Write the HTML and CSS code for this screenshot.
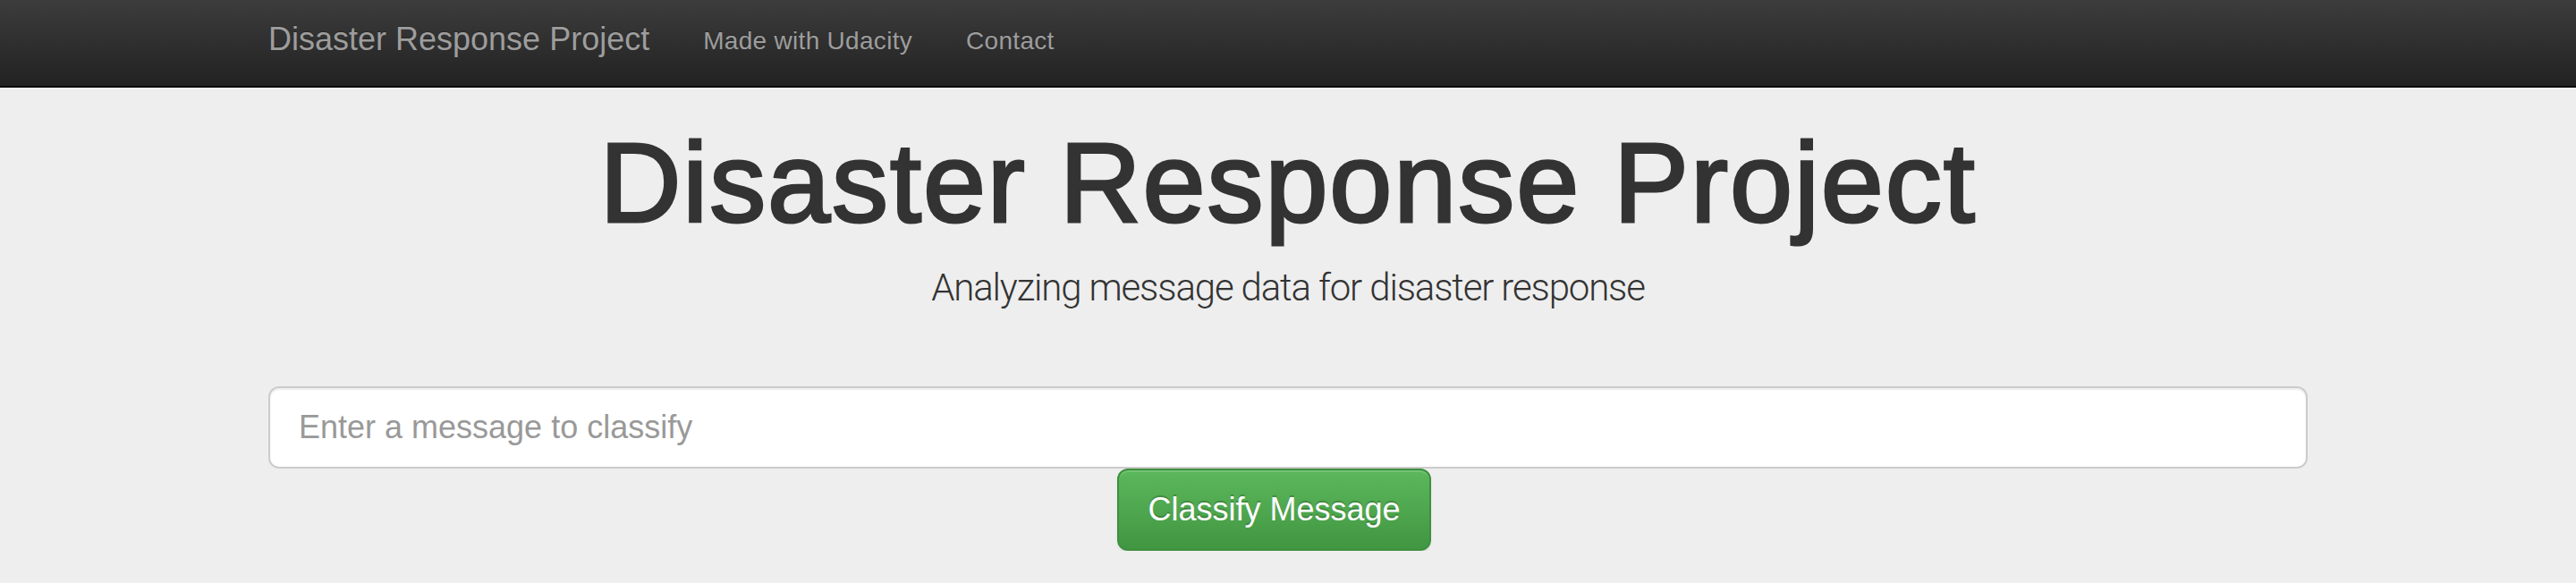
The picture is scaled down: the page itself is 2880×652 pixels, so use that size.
FILE: index.html
```html
<!DOCTYPE html>
<html lang="en">
<head>
<meta charset="utf-8">
<title>Disaster Response Project</title>
<link rel="stylesheet" href="styles.css">
</head>
<body>
<nav class="navbar">
  <div class="nav-inner">
    <a class="brand" href="#">Disaster Response Project</a>
    <ul class="nav-links">
      <li><a href="#">Made with Udacity</a></li>
      <li><a href="#">Contact</a></li>
    </ul>
  </div>
</nav>
<main class="jumbotron">
  <div class="container">
    <h1 class="title">Disaster Response Project</h1>
    <p class="subtitle">Analyzing message data for disaster response</p>
    <form class="classify-form">
      <input class="message-input" type="text" placeholder="Enter a message to classify">
      <div class="actions">
        <button class="btn-classify" type="button">Classify Message</button>
      </div>
    </form>
  </div>
</main>
</body>
</html>
```
FILE: styles.css
```css
html, body {
  margin: 0;
  padding: 0;
}
body {
  background: #eee;
  font-family: "Liberation Sans", Arial, sans-serif;
  color: #333;
}
.navbar {
  height: 96px;
  background: linear-gradient(to bottom, #3c3c3c 0%, #222 100%);
  border-bottom: 2px solid #080808;
}
.nav-inner {
  width: 2340px;
  margin: 0 auto;
  display: flex;
  align-items: flex-start;
}
.brand {
  padding: 24px 30px 0 30px;
  font-size: 36px;
  line-height: 40px;
  color: #9d9d9d;
  text-decoration: none;
  text-shadow: 0 -1px 0 rgba(0, 0, 0, 0.25);
}
.nav-links {
  display: flex;
  margin: 0;
  padding: 0;
  list-style: none;
}
.nav-links a {
  display: block;
  padding: 26px 30px 0 30px;
  font-size: 28px;
  line-height: 40px;
  letter-spacing: 0.3px;
  color: #9d9d9d;
  text-decoration: none;
  text-shadow: 0 -1px 0 rgba(0, 0, 0, 0.25);
}
.container {
  width: 2280px;
  margin: 0 auto;
}
.title {
  margin: 37px 0 0 0;
  font-size: 126px;
  line-height: 139px;
  font-weight: 400;
  letter-spacing: 1.9px;
  -webkit-text-stroke: 3px #333;
  text-align: center;
  color: #333;
}
.subtitle {
  margin: 18px 0 0 0;
  font-family: Roboto, "Liberation Sans", sans-serif;
  font-weight: 300;
  font-size: 42px;
  line-height: 60px;
  letter-spacing: -1.15px;
  text-align: center;
  color: #333;
}
.classify-form {
  margin: 80px 0 0 0;
}
.message-input {
  display: block;
  width: 100%;
  box-sizing: border-box;
  height: 92px;
  margin: 0;
  padding: 20px 32px;
  font-family: "Liberation Sans", Arial, sans-serif;
  font-size: 36px;
  line-height: 48px;
  color: #555;
  background: #fff;
  border: 2px solid #ccc;
  border-radius: 12px;
  box-shadow: inset 0 2px 2px rgba(0, 0, 0, 0.075);
  outline: none;
}
.message-input::placeholder {
  color: #999;
  opacity: 1;
}
.actions {
  display: flex;
  justify-content: center;
  padding-right: 31px;
}
.btn-classify {
  box-sizing: border-box;
  height: 92px;
  margin: 0;
  padding: 20px 32px;
  font-family: "Liberation Sans", Arial, sans-serif;
  font-size: 36px;
  line-height: 48px;
  color: #fff;
  background: linear-gradient(to bottom, #5cb85c 0%, #419641 100%);
  border: 2px solid #3e8f3e;
  border-radius: 12px;
  box-shadow: inset 0 2px 0 rgba(255, 255, 255, 0.15), 0 2px 2px rgba(0, 0, 0, 0.075);
  text-shadow: 0 -2px 0 rgba(0, 0, 0, 0.2);
  cursor: pointer;
}
```
